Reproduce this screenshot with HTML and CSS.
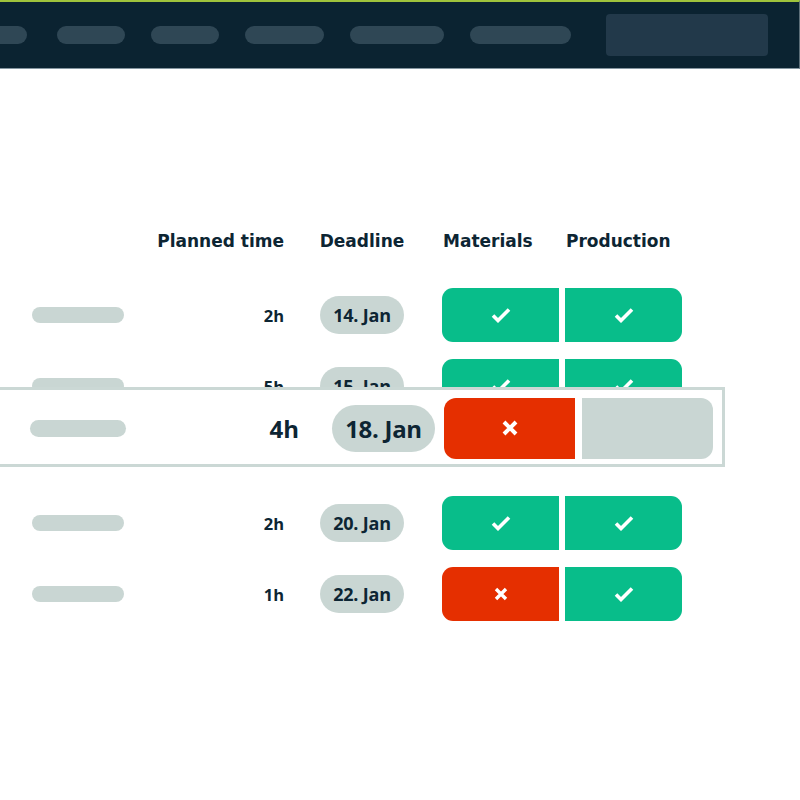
FILE: index.html
```html
<!DOCTYPE html>
<html lang="en">
<head>
<meta charset="utf-8">
<title>Orders</title>
<link rel="stylesheet" href="styles.css">
</head>
<body>
<header class="topbar">
  <nav class="nav">
    <span class="nav-pill first"></span>
    <span class="nav-pill w68"></span>
    <span class="nav-pill w68"></span>
    <span class="nav-pill w79"></span>
    <span class="nav-pill w94"></span>
    <span class="nav-pill w101"></span>
  </nav>
  <div class="nav-box"></div>
</header>

<main class="table">
  <div class="head-row">
    <div class="name"></div>
    <div class="time">Planned time</div>
    <div class="deadline">Deadline</div>
    <div class="status">
      <div class="hcell">Materials</div>
      <div class="hcell">Production</div>
    </div>
  </div>

  <div class="rows">
    <div class="row">
      <div class="name"><span class="name-pill"></span></div>
      <div class="time">2h</div>
      <div class="deadline"><span class="date">14. Jan</span></div>
      <div class="status">
        <div class="cell ok left"><svg class="check" viewBox="0 0 20 16"><path d="M2 8.5l5 5L18 2.5"/></svg></div>
        <div class="cell ok right"><svg class="check" viewBox="0 0 20 16"><path d="M2 8.5l5 5L18 2.5"/></svg></div>
      </div>
    </div>

    <div class="row">
      <div class="name"><span class="name-pill"></span></div>
      <div class="time">5h</div>
      <div class="deadline"><span class="date">15. Jan</span></div>
      <div class="status">
        <div class="cell ok left"><svg class="check" viewBox="0 0 20 16"><path d="M2 8.5l5 5L18 2.5"/></svg></div>
        <div class="cell ok right"><svg class="check" viewBox="0 0 20 16"><path d="M2 8.5l5 5L18 2.5"/></svg></div>
      </div>
    </div>

    <div class="row under">
      <div class="name"><span class="name-pill"></span></div>
      <div class="time">4h</div>
      <div class="deadline"><span class="date">18. Jan</span></div>
      <div class="status">
        <div class="cell bad left"></div>
        <div class="cell idle right"></div>
      </div>
    </div>

    <div class="row">
      <div class="name"><span class="name-pill"></span></div>
      <div class="time">2h</div>
      <div class="deadline"><span class="date">20. Jan</span></div>
      <div class="status">
        <div class="cell ok left"><svg class="check" viewBox="0 0 20 16"><path d="M2 8.5l5 5L18 2.5"/></svg></div>
        <div class="cell ok right"><svg class="check" viewBox="0 0 20 16"><path d="M2 8.5l5 5L18 2.5"/></svg></div>
      </div>
    </div>

    <div class="row">
      <div class="name"><span class="name-pill"></span></div>
      <div class="time">1h</div>
      <div class="deadline"><span class="date">22. Jan</span></div>
      <div class="status">
        <div class="cell bad left"><svg class="cross" viewBox="0 0 14 14"><path d="M2 2l10 10M12 2L2 12"/></svg></div>
        <div class="cell ok right"><svg class="check" viewBox="0 0 20 16"><path d="M2 8.5l5 5L18 2.5"/></svg></div>
      </div>
    </div>
  </div>

  <div class="focus-row">
    <div class="f-name"><span class="f-name-pill"></span></div>
    <div class="f-time">4h</div>
    <div class="f-deadline"><span class="f-date">18. Jan</span></div>
    <div class="f-status">
      <div class="f-cell bad left"><svg class="f-cross" viewBox="0 0 18 18"><path d="M3 3l12 12M15 3L3 15"/></svg></div>
      <div class="f-cell idle right"></div>
    </div>
  </div>
</main>
</body>
</html>
```

FILE: styles.css
```css
* { box-sizing: border-box; }

html, body {
  margin: 0;
  padding: 0;
  background: #ffffff;
}

body {
  width: 800px;
  height: 800px;
  overflow: hidden;
  font-family: "Open Sans", "Noto Sans", sans-serif;
  color: #0d2533;
}

/* ---------- top bar ---------- */
.topbar {
  height: 69px;
  background: #0b2331;
  border-top: 2px solid #9fc33c;
  border-bottom: 1px solid #8596a0;
  border-right: 1px solid #5d6f79;
  display: flex;
  align-items: center;
  justify-content: space-between;
  padding-right: 31px;
}

.nav {
  display: flex;
  align-items: center;
  gap: 26px;
}

.nav-pill {
  display: block;
  height: 18px;
  border-radius: 9px;
  background: #2f4755;
}
.nav-pill.first { width: 27px; border-radius: 0 9px 9px 0; margin-right: 4px; }
.nav-pill.w68 { width: 68px; }
.nav-pill.w79 { width: 79px; }
.nav-pill.w94 { width: 94px; }
.nav-pill.w101 { width: 101px; }

.nav-box {
  width: 162px;
  height: 42px;
  border-radius: 4px;
  background: #22394a;
}

/* ---------- table ---------- */
.table {
  position: relative;
  padding-top: 161px;
}

.head-row,
.row {
  display: flex;
  align-items: center;
  padding-left: 32px;
}

.head-row {
  height: 22px;
  font-family: "DejaVu Sans", "Open Sans", sans-serif;
  font-weight: 700;
  font-size: 17px;
  letter-spacing: 0;
  color: #0d2533;
  margin-bottom: 36px;
}

.name { width: 92px; flex: none; }
.time { width: 160px; flex: none; text-align: right; }
.deadline { width: 84px; margin-left: 36px; flex: none; display: flex; justify-content: center; }
.head-row .deadline { white-space: nowrap; }

.status {
  margin-left: 38px;
  display: flex;
  gap: 6px;
  flex: none;
}

.hcell { width: 117px; padding-left: 1px; white-space: nowrap; }

.rows {
  display: flex;
  flex-direction: column;
  gap: 17px;
}

.row {
  height: 54px;
  font-weight: 700;
  font-size: 16.5px;
}
.row.under { height: 49px; visibility: hidden; }

.name-pill {
  display: block;
  width: 92px;
  height: 16px;
  border-radius: 8px;
  background: #c9d6d3;
}

.date {
  display: flex;
  align-items: center;
  justify-content: center;
  width: 84px;
  height: 38px;
  border-radius: 19px;
  background: #c9d6d3;
  font-size: 18px;
  letter-spacing: -0.2px;
  font-weight: 700;
  color: #0d2533;
}

.cell {
  width: 117px;
  height: 54px;
  display: flex;
  align-items: center;
  justify-content: center;
}
.cell.left { border-radius: 11px 0 0 11px; }
.cell.right { border-radius: 0 11px 11px 0; }
.ok { background: #08bd8a; }
.bad { background: #e52f00; }
.idle { background: #c9d6d3; }

.check { width: 20px; height: 16px; }
.check path { fill: none; stroke: #ffffff; stroke-width: 3.6; stroke-linecap: butt; stroke-linejoin: miter; }

.cross { width: 14px; height: 14px; }
.cross path { fill: none; stroke: #ffffff; stroke-width: 3.4; }

/* ---------- highlighted row overlay ---------- */
.focus-row {
  position: absolute;
  top: 318px;
  left: -10px;
  width: 735px;
  height: 80px;
  background: #ffffff;
  border: 3px solid #cbd8d5;
  display: flex;
  align-items: center;
  padding-left: 37px;
  padding-top: 2px;
  font-weight: 700;
}

.f-name { width: 96px; flex: none; }
.f-name-pill {
  display: block;
  width: 96px;
  height: 17px;
  border-radius: 8.5px;
  background: #c9d6d3;
}
.f-time { width: 173px; flex: none; text-align: right; font-size: 24px; }
.f-deadline { margin-left: 33px; flex: none; }
.f-date {
  display: flex;
  align-items: center;
  justify-content: center;
  width: 103px;
  height: 47px;
  border-radius: 24px;
  background: #c9d6d3;
  font-size: 24px;
  letter-spacing: -0.3px;
  font-weight: 700;
}
.f-status { margin-left: 9px; display: flex; gap: 7px; flex: none; }
.f-cell {
  width: 131px;
  height: 61px;
  display: flex;
  align-items: center;
  justify-content: center;
}
.f-cell.left { border-radius: 12px 0 0 12px; }
.f-cell.right { border-radius: 0 12px 12px 0; }
.f-cross { width: 18px; height: 18px; }
.f-cross path { fill: none; stroke: #ffffff; stroke-width: 4; }
```
